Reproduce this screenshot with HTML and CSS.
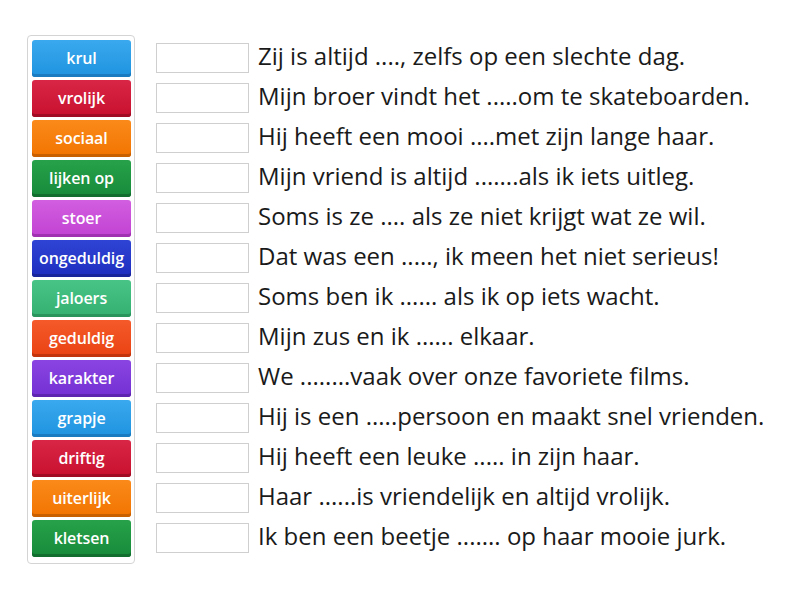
FILE: index.html
```html
<!DOCTYPE html>
<html>
<head>
<meta charset="utf-8">
<link rel="stylesheet" href="styles.css">
</head>
<body>
<div class="page">
  <div class="panel">
    <div class="btn blue">krul</div>
    <div class="btn red">vrolijk</div>
    <div class="btn orange">sociaal</div>
    <div class="btn green">lijken op</div>
    <div class="btn violet">stoer</div>
    <div class="btn navy">ongeduldig</div>
    <div class="btn mint">jaloers</div>
    <div class="btn tomato">geduldig</div>
    <div class="btn purple">karakter</div>
    <div class="btn blue">grapje</div>
    <div class="btn red">driftig</div>
    <div class="btn orange">uiterlijk</div>
    <div class="btn green">kletsen</div>
  </div>
  <div class="rows">
    <div class="row"><div class="box"></div><span class="text">Zij is altijd ...., zelfs op een slechte dag.</span></div>
    <div class="row"><div class="box"></div><span class="text">Mijn broer vindt het .....om te skateboarden.</span></div>
    <div class="row"><div class="box"></div><span class="text">Hij heeft een mooi ....met zijn lange haar.</span></div>
    <div class="row"><div class="box"></div><span class="text">Mijn vriend is altijd .......als ik iets uitleg.</span></div>
    <div class="row"><div class="box"></div><span class="text">Soms is ze .... als ze niet krijgt wat ze wil.</span></div>
    <div class="row"><div class="box"></div><span class="text">Dat was een ....., ik meen het niet serieus!</span></div>
    <div class="row"><div class="box"></div><span class="text">Soms ben ik ...... als ik op iets wacht.</span></div>
    <div class="row"><div class="box"></div><span class="text">Mijn zus en ik ...... elkaar.</span></div>
    <div class="row"><div class="box"></div><span class="text">We ........vaak over onze favoriete films.</span></div>
    <div class="row"><div class="box"></div><span class="text">Hij is een .....persoon en maakt snel vrienden.</span></div>
    <div class="row"><div class="box"></div><span class="text">Hij heeft een leuke ..... in zijn haar.</span></div>
    <div class="row"><div class="box"></div><span class="text">Haar ......is vriendelijk en altijd vrolijk.</span></div>
    <div class="row"><div class="box"></div><span class="text">Ik ben een beetje ....... op haar mooie jurk.</span></div>
  </div>
</div>
</body>
</html>
```
FILE: styles.css
```css
html, body {
  margin: 0;
  padding: 0;
  background: #ffffff;
}
.page {
  display: flex;
  align-items: flex-start;
  padding: 35px 0 0 27px;
  font-family: "Open Sans", Lato, sans-serif;
  font-variant-ligatures: none;
}
.panel {
  display: flex;
  flex-direction: column;
  gap: 3px;
  padding: 4px 3px 6px 4px;
  border: 1px solid #d4d4d4;
  border-radius: 4px;
}
.btn {
  width: 99px;
  height: 37px;
  box-sizing: border-box;
  padding-bottom: 2px;
  border-radius: 3px;
  color: #ffffff;
  font-size: 16px;
  font-weight: 600;
  display: flex;
  align-items: center;
  justify-content: center;
  white-space: nowrap;
  letter-spacing: -0.1px;
}
.blue { background: linear-gradient(#3aa9ee, #1f93e0); box-shadow: inset 0 -3px 0 #1a7bc0; }
.red { background: linear-gradient(#d92646, #c8102e); box-shadow: inset 0 -3px 0 #a10c25; }
.orange { background: linear-gradient(#fa8a1a, #f27400); box-shadow: inset 0 -3px 0 #c85f00; }
.green { background: linear-gradient(#27a24a, #178a3a); box-shadow: inset 0 -3px 0 #126e2e; }
.violet { background: linear-gradient(#d25ee0, #c142d2); box-shadow: inset 0 -3px 0 #a031b1; }
.navy { background: linear-gradient(#2f44d4, #1e2ebf); box-shadow: inset 0 -3px 0 #18259b; }
.mint { background: linear-gradient(#48c487, #34b170); box-shadow: inset 0 -3px 0 #2a945d; }
.tomato { background: linear-gradient(#f55a2a, #e94212); box-shadow: inset 0 -3px 0 #c2350c; }
.purple { background: linear-gradient(#8a44e2, #7430d3); box-shadow: inset 0 -3px 0 #5e25b0; }
.rows {
  display: flex;
  flex-direction: column;
  margin-left: 21px;
  padding-top: 3px;
}
.row {
  height: 40px;
  display: flex;
  align-items: center;
  gap: 9px;
}
.box {
  width: 93px;
  height: 30px;
  box-sizing: border-box;
  border: 1px solid #cfcfcf;
  background: #ffffff;
  flex: none;
}
.text {
  font-size: 24px;
  line-height: 30px;
  color: #1a1a1a;
  white-space: nowrap;
  margin-top: -4px;
}
```
